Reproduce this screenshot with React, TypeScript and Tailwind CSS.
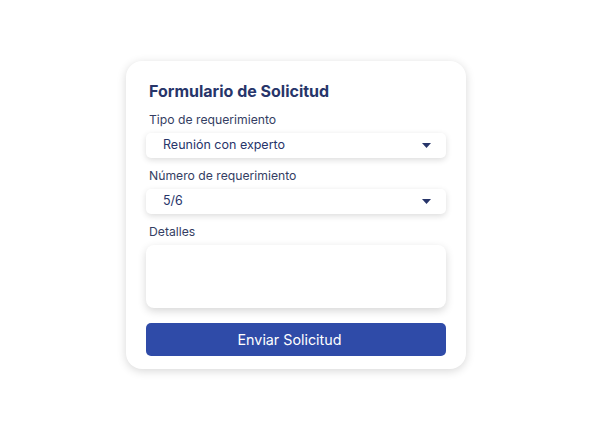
const Caret = () => (
  <svg width="9" height="5" viewBox="0 0 9 5" className="shrink-0">
    <path d="M0 0h9L4.5 5z" fill="#27356a" />
  </svg>
);

const SelectBox = ({ value }: { value: string }) => (
  <div className="flex h-[25px] items-center justify-between rounded-[5px] bg-white pl-[17px] pr-[15px] shadow-[0_2px_6px_rgba(0,0,0,0.14)]">
    <span className="text-[12.5px] text-[#27356a]">{value}</span>
    <Caret />
  </div>
);

export default function App() {
  return (
    <div
      className="flex h-[430px] w-full items-center justify-center bg-white"
      style={{ fontFamily: "Inter, 'Noto Sans', sans-serif" }}
    >
      <div className="w-[340px] rounded-[16px] bg-white px-5 pt-[20px] pb-[13px] shadow-[0_2px_10px_rgba(0,0,0,0.16)]">
        <h1 className="pl-[3px] text-[16px] leading-[20px] font-bold text-[#27356a]">
          Formulario de Solicitud
        </h1>

        <p className="mt-[11px] mb-[5px] pl-[3px] text-[12.2px] leading-[16px] text-[#343e63]">
          Tipo de requerimiento
        </p>
        <SelectBox value="Reunión con experto" />

        <p className="mt-[10px] mb-[5px] pl-[3px] text-[12.2px] leading-[16px] text-[#343e63]">
          Número de requerimiento
        </p>
        <SelectBox value="5/6" />

        <p className="mt-[10px] mb-[5px] pl-[3px] text-[12.2px] leading-[16px] text-[#343e63]">
          Detalles
        </p>
        <div className="h-[63px] rounded-[8px] bg-white shadow-[0_3px_8px_rgba(0,0,0,0.16)]" />

        <button className="mt-[15px] flex h-[33px] w-full items-center justify-center rounded-[5px] bg-[#2f4ba8] pr-[13px] text-[14.3px] text-white">
          Enviar Solicitud
        </button>
      </div>
    </div>
  );
}
